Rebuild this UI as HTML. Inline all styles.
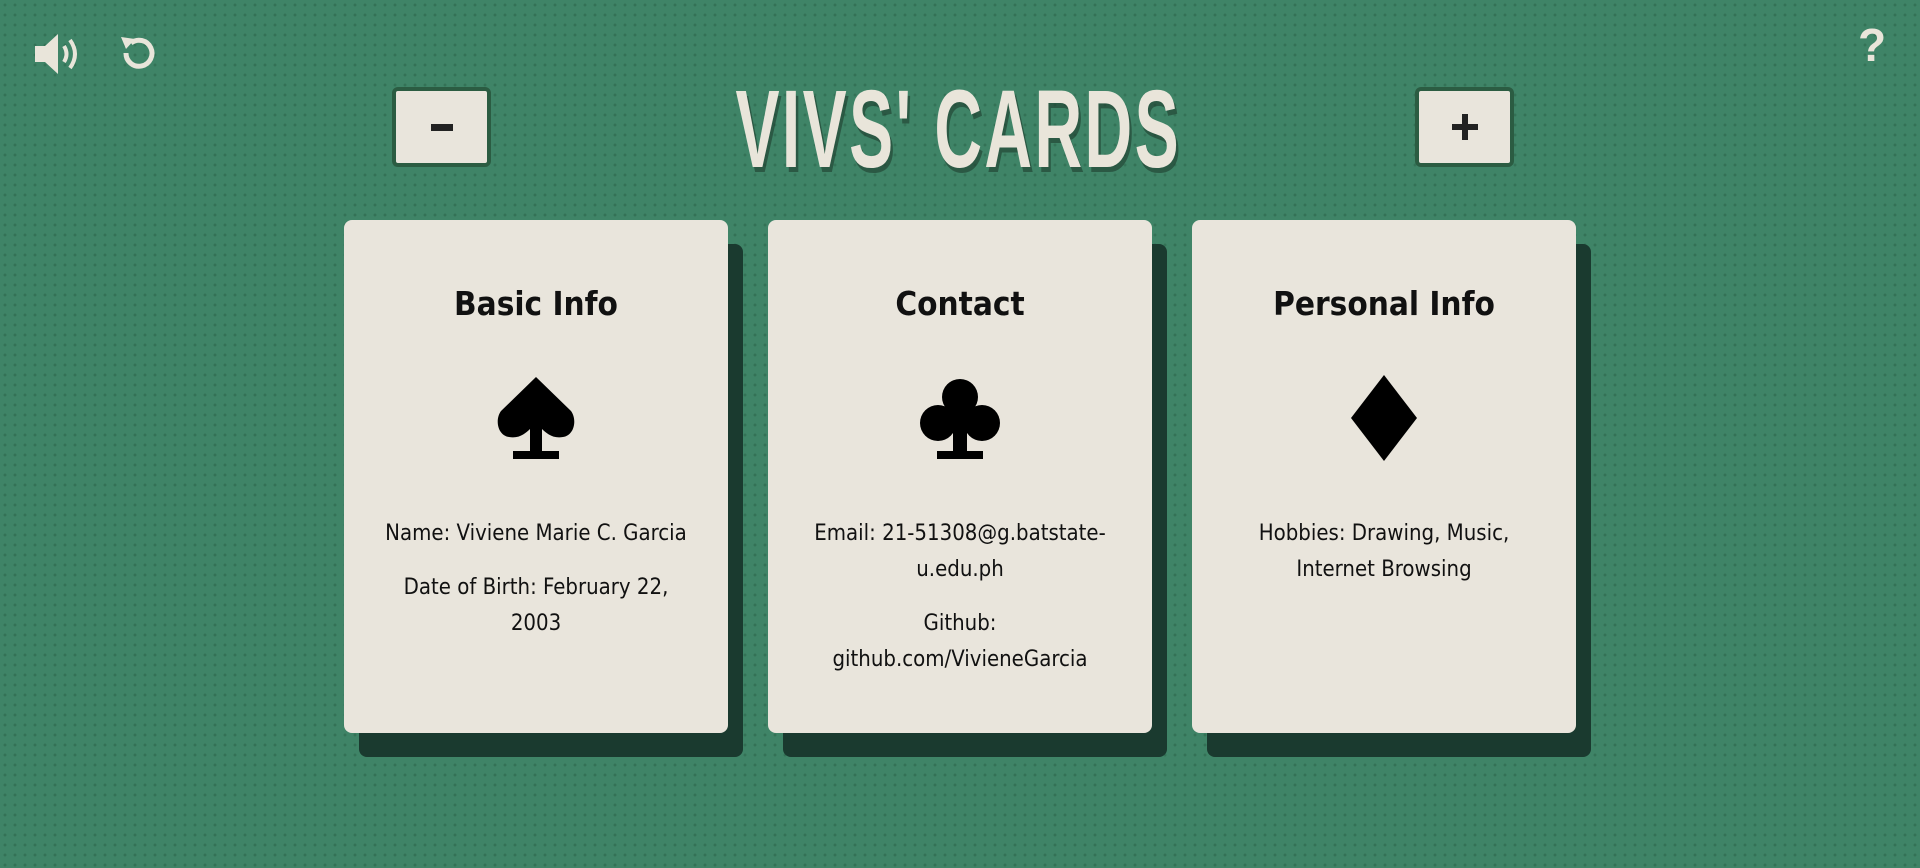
<!DOCTYPE html>
<html><head><meta charset="utf-8"><style>
*{margin:0;padding:0;box-sizing:border-box}
html,body{width:1920px;height:868px;overflow:hidden}
body{background-color:#3f8467;background-image:radial-gradient(circle,rgba(30,80,55,.35) 1.3px,transparent 1.6px);background-size:10px 10px;font-family:"DejaVu Sans Condensed","Liberation Sans Narrow","Liberation Sans",sans-serif;position:relative}
.ic{position:absolute}
.btn{position:absolute;top:87px;width:99px;height:80px;background:#e9e5dc;border:4px solid #2b5c42;border-radius:6px;display:flex;align-items:center;justify-content:center}
.title{position:absolute;left:560px;width:796px;top:80px;text-align:center;color:#e9e5da;font-family:"Liberation Sans Narrow","Liberation Sans",sans-serif;font-weight:bold;font-size:110px;line-height:100px;text-shadow:4px 5px 0 rgba(30,60,45,.6);white-space:nowrap}
.title span{display:inline-block;transform:scaleX(.6);letter-spacing:4px}
.card{position:absolute;top:220px;width:384px;height:540px;}
.card .sh{position:absolute;left:15px;top:24px;width:384px;height:513px;background:#1a3a2f;border-radius:8px}
.card .f{position:absolute;left:0;top:0;width:384px;height:513px;background:#e9e5dc;border-radius:8px;text-align:center;color:#111}
.card h2{position:absolute;width:100%;font-size:33px;font-weight:bold;top:62px;line-height:44px}
.card svg{position:absolute;left:147px;top:153px}
.card p{position:absolute;top:296px;width:100%;padding:0 37px;font-size:22px;line-height:36px;font-family:"DejaVu Sans Condensed",sans-serif}
.card p.b{top:350px}
</style></head><body>
<svg class="ic" style="left:33px;top:31px" width="52" height="46" viewBox="0 0 52 46"><path d="M2 15h10L25 3v40L12 31H2z" fill="#e9e5da"/><path d="M31 15q5 8 0 16M37 9q10 14 0 28" stroke="#e9e5da" stroke-width="4" fill="none"/></svg>
<svg class="ic" style="left:118px;top:33px" width="42" height="40" viewBox="0 0 42 40"><path d="M8 20a13 13 0 1 0 5-10" stroke="#e9e5da" stroke-width="5" fill="none"/><path d="M3 4l14 2-9 10z" fill="#e9e5da"/></svg>
<div class="ic" style="left:1858px;top:18px;color:#e9e5da;font-size:46px;font-weight:bold;font-family:'Liberation Sans',sans-serif">?</div>
<div class="btn" style="left:392px"><div style="width:22px;height:7px;background:#222"></div></div>
<div class="title"><span>VIVS' CARDS</span></div>
<div class="btn" style="left:1415px"><svg width="26" height="26"><path d="M10 0h6v10h10v6H16v10h-6V16H0v-6h10z" fill="#222"/></svg></div>

<div class="card" style="left:344px"><div class="sh"></div><div class="f">
<h2>Basic Info</h2>
<svg width="90" height="95" viewBox="0 0 90 95"><path d="M45 4L10 38C4 46 6 62 18 64c10 2 17-4 21-8v22H22v8h46v-8H51V56c4 4 11 10 21 8 12-2 14-18 8-26z" fill="#000"/></svg>
<p style="padding:0 20px">Name: Viviene Marie C. Garcia</p>
<p class="b">Date of Birth: February 22,<br>2003</p>
</div></div>

<div class="card" style="left:768px"><div class="sh"></div><div class="f">
<h2>Contact</h2>
<svg width="90" height="95" viewBox="0 0 90 95"><circle cx="45" cy="24" r="18" fill="#000"/><circle cx="23" cy="50" r="18" fill="#000"/><circle cx="67" cy="50" r="18" fill="#000"/><path d="M38 35h14v43h16v8H22v-8h16z" fill="#000"/></svg>
<p style="padding:0 20px">Email: 21-51308@g.batstate-<br>u.edu.ph</p>
<p class="b" style="top:386px">Github:<br>github.com/VivieneGarcia</p>
</div></div>

<div class="card" style="left:1192px"><div class="sh"></div><div class="f">
<h2>Personal Info</h2>
<svg width="90" height="95" viewBox="0 0 90 95"><path d="M45 2L12 45l33 43 33-43z" fill="#000"/></svg>
<p style="padding:0 20px">Hobbies: Drawing, Music,<br>Internet Browsing</p>
</div></div>
</body></html>
